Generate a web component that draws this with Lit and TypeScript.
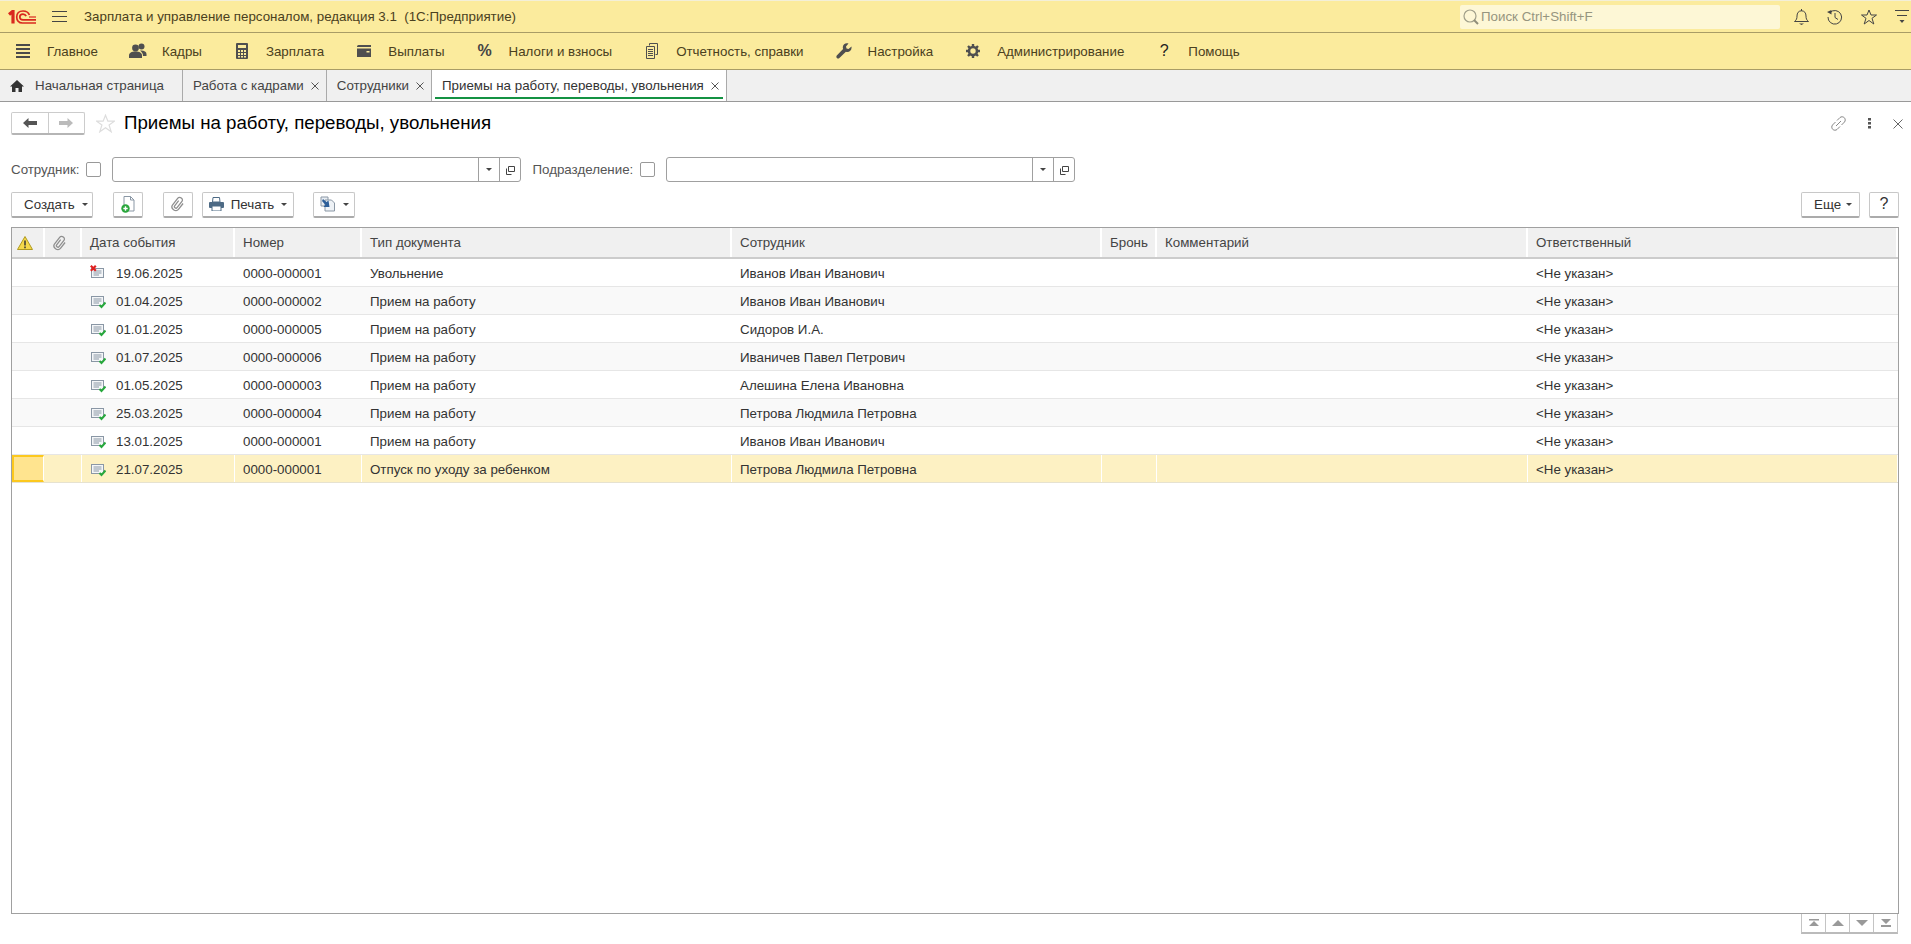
import { html, svg, LitElement, css } from 'lit';
import { customElement } from 'lit/decorators.js';

const icon = (w: number, h: number, body: unknown) =>
  html`<svg class="ic" width=${w} height=${h} viewBox="0 0 ${w} ${h}">${body}</svg>`;

const logo = icon(28, 14, svg`
  <g fill="none" stroke="#d9281e">
    <path d="M1 4.500 L5 1.200 V13.500" stroke-width="3.200"/>
    <path d="M28 13 H14.500 C10.500 13 8.700 10 8.700 7 C8.700 3.600 11 1 15 1 C18.400 1 20.500 2.600 21.400 5" stroke-width="1.700"/>
    <path d="M28 9.800 H15 C13 9.800 11.800 8.600 11.800 7 C11.800 5.200 13.200 4.100 15 4.100 C16.600 4.100 17.600 4.800 18.200 6.200" stroke-width="1.700"/>
    <path d="M28 7 H21" stroke-width="1.200"/>
  </g>`);

const burger = icon(15, 12, svg`<path d="M0 .5H15M0 5.500H15M0 10.500H15" stroke="#444" stroke-width="1"/>`);
const lines = icon(14, 14, svg`<path d="M0 1H14M0 5H14M0 9H14M0 13H14" stroke="#4a4a4a" stroke-width="2"/>`);
const people = icon(18, 16, svg`<g fill="#4f4f4f">
  <circle cx="6.500" cy="5" r="3.400"/><path d="M0 15v-2.500C0 10 2.500 8.500 6.500 8.500S13 10 13 12.500V15z"/>
  <circle cx="12.500" cy="3.600" r="3"/><path d="M11 7.500c3.500-.5 6.500 1 6.500 3.500v2H14c0-2.500-1-4-3-5.500z"/></g>`);
const calc = icon(12, 16, svg`<rect width="12" height="16" rx="1" fill="#4f4f4f"/><rect x="2" y="2" width="8" height="3" fill="#fbeb9d"/>
  <g fill="#fbeb9d"><rect x="2" y="7" width="2" height="2"/><rect x="5" y="7" width="2" height="2"/><rect x="8" y="7" width="2" height="2"/>
  <rect x="2" y="10" width="2" height="2"/><rect x="5" y="10" width="2" height="2"/><rect x="8" y="10" width="2" height="2"/>
  <rect x="2" y="13" width="2" height="1.500"/><rect x="5" y="13" width="2" height="1.500"/><rect x="8" y="13" width="2" height="1.500"/></g>`);
const wallet = icon(14, 12, svg`<path d="M0 1.500Q0 0 1.500 0H14V2H0z" fill="#4f4f4f"/><path d="M0 3.500H14V12H0z" fill="#4f4f4f"/><rect x="9.500" y="6" width="3" height="1.500" fill="#fbeb9d"/>`);
const reports = icon(12, 16, svg`<g fill="none" stroke="#4f4f4f"><path d="M3.500 2.500V.5H11.500V11.500H9.500"/><path d="M.5 3.500H8.500V15.500H.5z"/><path d="M2 6.500H7M2 8.500H7M2 10.500H7M2 12.500H7"/></g>`);
const wrench = icon(16, 16, svg`<path d="M15.500 3.500 12.500 6 10.500 5.500 10 3.500 12.500 .6C10 -.4 7 1 6.800 4c0 .7.1 1.300.3 1.900L.8 12.500C.2 13.200.2 14.300.9 15c.7.7 1.800.7 2.500 0l6.500-6.300c3 1 6.200-1.200 5.600-5.200z" fill="#4f4f4f"/>`);
const gear = icon(16, 16, svg`<g stroke="#4f4f4f" fill="none"><circle cx="8" cy="8" r="4" stroke-width="2.600"/>
  <path d="M8 1V3.500M8 12.500V15M1 8H3.500M12.500 8H15M3 3 4.800 4.800M11.200 11.200 13 13M13 3 11.200 4.800M4.800 11.200 3 13" stroke-width="2.400"/></g>`);
const home = icon(14, 12, svg`<path d="M7 0 14 6.500H12V12H8.500V8H5.500V12H2V6.500H0z" fill="#333"/>`);
const close = icon(8, 8, svg`<path d="M.5.5 7.500 7.500M7.500.5.5 7.500" stroke="#555" stroke-width="1"/>`);
const search = icon(16, 16, svg`<circle cx="7" cy="7" r="6" fill="none" stroke="#a09f8a" stroke-width="1.200"/><path d="M11 11 15 15" stroke="#8f8e7a" stroke-width="2"/>`);
const bell = icon(15, 16, svg`<g fill="none" stroke="#444"><path d="M.5 12.500H14.500C12.500 11 12 9.500 12 7 12 4 10.500 1.800 7.500 1.800S3 4 3 7C3 9.500 2.500 11 .5 12.500z"/><path d="M7.500 0V2"/></g><path d="M5 14.500H10L7.500 16z" fill="#444"/>`);
const history = icon(16, 16, svg`<g fill="none" stroke="#444"><path d="M3 3.500A6.800 6.800 0 1 1 1 8"/><path d="M8 4V8.500L11 10.500"/></g><path d="M0 3 4.500 1V5.500z" fill="#444"/>`);
const star = (c: string, w = 16, h = 16) => html`<svg class="ic" width=${w} height=${h} viewBox="0 0 16 16"><path d="M8 1 10 6H15.500L11 9.300 12.800 15 8 11.500 3.200 15 5 9.300 .5 6H6z" fill="none" stroke=${c}/></svg>`;
const menuRight = icon(14, 14, svg`<path d="M0 .5H14M2 5.500H12" stroke="#444"/><path d="M4.500 10H9.500L7 13z" fill="#444"/>`);
const link = icon(15, 15, svg`<g fill="none" stroke="#888"><path d="M6 4.500 9 1.500C10.200.5 12 .5 13.300 1.700 14.500 3 14.500 4.800 13.500 6L10.500 9"/><path d="M9 10.500 6 13.500C4.800 14.500 3 14.500 1.700 13.300 .5 12 .5 10.200 1.500 9L4.500 6"/><path d="M5 10 10 5"/></g>`);
const dots = icon(3, 11, svg`<g fill="#555"><rect width="3" height="2.500"/><rect y="4" width="3" height="2.500"/><rect y="8" width="3" height="2.500"/></g>`);
const closeBig = icon(10, 10, svg`<path d="M.5.5 9.500 9.500M9.500.5.5 9.500" stroke="#666"/>`);
const back = icon(14, 10, svg`<path d="M0 5 5.500 0V3H14V7H5.500V10z" fill="#555"/>`);
const forward = icon(14, 10, svg`<path d="M14 5 8.500 0V3H0V7H8.500V10z" fill="#bbb"/>`);
const caret = icon(6, 3, svg`<path d="M0 0H6L3 3z" fill="#444"/>`);
const pick = icon(9, 10, svg`<g fill="none" stroke="#444"><path d="M2.500 1.500H8.500V6.500H2.500z"/><path d="M.5 3.500V9.500H5.500"/></g>`);
const clip = html`<svg class="ic" width="16" height="16" viewBox="0 0 16 16"><path transform="rotate(38 8 8)" d="M6.500 5V11.500C6.500 13.300 9.500 13.300 9.500 11.500V3.500C9.500 .5 4.300 .5 4.300 3.500V12C4.300 16.300 11.700 16.300 11.700 12V4.500" fill="none" stroke="#8f8f8f" stroke-width="1.300"/></svg>`;
const addDoc = icon(14, 17, svg`<path d="M3 .5H9.500L13 4V15H3z" fill="#fff" stroke="#8a97a5"/><path d="M9.500 .5V4H13" fill="none" stroke="#8a97a5"/><circle cx="4.500" cy="12.500" r="4.200" fill="#2aa63c"/><path d="M2.300 12.500H6.700M4.500 10.300V14.700" stroke="#fff" stroke-width="1.400"/>`);
const printer = icon(15, 14, svg`<path d="M4 .5H10.500L11 5H3.500z" fill="#fff" stroke="#4d6a85"/><rect y="5" width="15" height="6" rx="1" fill="#4d6a85"/><rect x="3" y="9" width="9" height="5" fill="#fff" stroke="#4d6a85"/>`);
const loadDoc = icon(16, 16, svg`<path d="M1 1H8V10H1z" fill="#e8edf2" stroke="#8a97a5"/><path d="M5 4H11.500L14.500 7V15H5z" fill="#eef2f6" stroke="#8a97a5"/><path d="M3 3 6.500 6 8.500 4.500 9.500 11 3.500 11 5.300 8.800 2 5z" fill="#2d5f99"/>`);
const warn = icon(16, 14, svg`<path d="M8 .5 15.500 13.500H.5z" fill="#f4d84a" stroke="#b09a20"/><path d="M8 4.500V9.500M8 10.500V12.300" stroke="#333" stroke-width="1.500"/>`);
const docBody = svg`<rect x="1.500" y="3.500" width="12" height="9" fill="#f4f6f8" stroke="#8a97a5"/><path d="M3.500 6H11.500M3.500 8H11.500M3.500 10H9" stroke="#8a97a5"/>`;
const posted = icon(16, 16, svg`${docBody}<path d="M9.500 12 11.500 14 15.500 9.500" fill="none" stroke="#27a83c" stroke-width="2"/>`);
const removed = icon(16, 16, svg`${docBody}<path d="M.8 .8 5.800 5.800M5.800 .8 .8 5.800" stroke="#e02020" stroke-width="2.200"/>`);
const tri = (d: string) => icon(14, 8, svg`<path d=${d} fill="#999"/>`);

const menu = [
  { icon: lines, text: 'Главное' },
  { icon: people, text: 'Кадры' },
  { icon: calc, text: 'Зарплата' },
  { icon: wallet, text: 'Выплаты' },
  { icon: html`<span class="glyph bold">%</span>`, text: 'Налоги и взносы' },
  { icon: reports, text: 'Отчетность, справки' },
  { icon: wrench, text: 'Настройка' },
  { icon: gear, text: 'Администрирование' },
  { icon: html`<span class="glyph">?</span>`, text: 'Помощь' },
];

const columns = ['Дата события', 'Номер', 'Тип документа', 'Сотрудник', 'Бронь', 'Комментарий', 'Ответственный'];

const rows = [
  ['19.06.2025', '0000-000001', 'Увольнение', 'Иванов Иван Иванович'],
  ['01.04.2025', '0000-000002', 'Прием на работу', 'Иванов Иван Иванович'],
  ['01.01.2025', '0000-000005', 'Прием на работу', 'Сидоров И.А.'],
  ['01.07.2025', '0000-000006', 'Прием на работу', 'Иваничев Павел Петрович'],
  ['01.05.2025', '0000-000003', 'Прием на работу', 'Алешина Елена Ивановна'],
  ['25.03.2025', '0000-000004', 'Прием на работу', 'Петрова Людмила Петровна'],
  ['13.01.2025', '0000-000001', 'Прием на работу', 'Иванов Иван Иванович'],
  ['21.07.2025', '0000-000001', 'Отпуск по уходу за ребенком', 'Петрова Людмила Петровна'],
];

@customElement('app-root')
export class AppRoot extends LitElement {
  static styles = css`
    :host {
      display: flex;
      flex-direction: column;
      height: 100vh;
      font-family: "Liberation Sans", Arial, sans-serif;
      font-size: 13.33px;
      color: #333;
      background: #fff;
      overflow: hidden;
    }
    .ic { display: block; flex: none; }

    .titlebar {
      display: flex;
      align-items: center;
      height: 31px;
      flex: none;
      background: #fbeb9d;
      border-top: 1px solid #f3efd8;
      border-bottom: 1px solid #a89c66;
      padding-left: 8px;
      color: #4a4020;
    }
    .burger { margin-left: 16px; }
    .app-name { margin-left: 17px; white-space: pre; }
    .search {
      margin-left: auto;
      width: 320px;
      height: 24px;
      box-sizing: border-box;
      display: flex;
      align-items: center;
      gap: 2px;
      padding-left: 3px;
      background: #fdf7d6;
      border-radius: 2px;
      color: #96957f;
    }
    .top-icons {
      display: flex;
      align-items: center;
      gap: 18px;
      margin-left: 14px;
      margin-right: 2px;
    }

    .menubar {
      display: flex;
      align-items: center;
      flex: none;
      gap: 32px;
      height: 36px;
      padding-left: 15px;
      background: #fbeb9d;
      border-bottom: 1px solid #a89c66;
      color: #4a4020;
    }
    .menu-item { display: flex; align-items: center; gap: 16px; }
    .menu-icon { width: 16px; display: flex; justify-content: center; }
    .glyph { font-size: 16px; color: #222; }
    .glyph.bold { font-weight: bold; color: #444; }

    .tabs {
      display: flex;
      flex: none;
      height: 31px;
      background: #f0f0f0;
      border-bottom: 1px solid #999;
      color: #444;
    }
    .tab {
      display: flex;
      align-items: center;
      gap: 7px;
      padding: 0 7px 0 10px;
      border-right: 1px solid #aaa;
      position: relative;
    }
    .tab.home { padding: 0 18px 0 10px; gap: 11px; }
    .tab.active { background: #fff; color: #333; }
    .tab.active::after {
      content: "";
      position: absolute;
      left: 3px;
      right: 3px;
      bottom: 2px;
      height: 2px;
      background: #149243;
    }

    .page {
      flex: 1;
      min-height: 0;
      display: flex;
      flex-direction: column;
      padding: 10px 12px 10px 11px;
    }
    .head { display: flex; align-items: center; height: 23px; flex: none; }
    .nav {
      display: flex;
      height: 23px;
      width: 74px;
      box-sizing: border-box;
      border: 1px solid #ccc;
      border-bottom: 2px solid #b5b5b5;
      border-radius: 2px;
    }
    .nav div { flex: 1; display: flex; align-items: center; justify-content: center; }
    .nav div:first-child { border-right: 1px solid #ccc; }
    .fav { margin-left: 11px; }
    h1 { margin: 0 0 2px 9px; font-size: 18.7px; font-weight: normal; color: #000; }
    .head-actions { margin-left: auto; margin-right: -4px; display: flex; align-items: center; gap: 22px; }

    .filters { display: flex; align-items: center; height: 25px; margin-top: 22px; flex: none; color: #555; }
    .check {
      width: 15px;
      height: 15px;
      box-sizing: border-box;
      border: 1px solid #999;
      border-radius: 2px;
      margin-left: 7px;
    }
    .field {
      display: flex;
      height: 25px;
      box-sizing: border-box;
      width: 409px;
      margin-left: 11px;
      border: 1px solid #a0a0a0;
      border-radius: 3px;
    }
    .field .grow { flex: 1; }
    .field .cell {
      display: flex;
      align-items: center;
      justify-content: center;
      box-sizing: border-box;
      width: 21px;
      border-left: 1px solid #a0a0a0;
    }
    .sub-label { margin-left: 11px; }

    .toolbar { display: flex; align-items: center; margin-top: 9px; height: 27px; flex: none; }
    .btn {
      display: flex;
      align-items: center;
      justify-content: center;
      gap: 7px;
      height: 26px;
      box-sizing: border-box;
      background: #fff;
      border: 1px solid #c8c8c8;
      border-bottom: 2px solid #ababab;
      border-radius: 2px;
      color: #333;
    }
    .btn.create { width: 82px; justify-content: flex-start; padding-left: 12px; }
    .btn.square { width: 30px; margin-left: 20px; }
    .btn.print { width: 92px; margin-left: 9px; }
    .btn.load { width: 42px; margin-left: 19px; }
    .btn.more { width: 59px; margin-left: auto; justify-content: flex-start; padding-left: 12px; gap: 5px; }
    .btn.help { width: 30px; margin-left: 9px; font-size: 16px; }

    .table {
      flex: 1;
      min-height: 0;
      margin-top: 9px;
      border: 1px solid #a0a0a0;
    }
    .row {
      display: grid;
      grid-template-columns: 33px 37px 153px 127px 370px 370px 55px 371px 370px;
      height: 28px;
      box-sizing: border-box;
      border-bottom: 1px solid #e6e6e6;
    }
    .row.header {
      height: 31px;
      background: #f0f0f0;
      border-bottom: 2px solid #ccc;
    }
    .row.even { background: #f9f9f9; }
    .row.current { background: #fdf1c3; border-bottom-color: #e6e2d0; }
    .cell-box {
      display: flex;
      align-items: center;
      gap: 10px;
      padding: 1px 0 0 8px;
      white-space: nowrap;
      overflow: hidden;
    }
    .row.current .cell-box { border-right: 1px solid #fff; }
    .row.header .cell-box { border-right: 2px solid #fff; color: #444; padding-top: 0; }
    .row.header .cell-box.mark { padding-left: 5px; }
    .row.header .cell-box.attach { padding-left: 7px; }
    .row .active-cell {
      background: #ffe48f;
      border: 2px solid #fcc81e;
      margin-right: 1px;
    }

    .pager { display: flex; justify-content: flex-end; flex: none; height: 20px; }
    .pager-group {
      display: flex;
      width: 97px;
      box-sizing: border-box;
      border: 1px solid #c4c4c4;
      border-top: none;
      border-bottom: 2px solid #bbb;
      margin-right: 1px;
    }
    .pager-group div {
      flex: 1;
      display: flex;
      align-items: center;
      justify-content: center;
      border-right: 1px solid #c4c4c4;
    }
    .pager-group div:last-child { border-right: none; }
  `;

  renderRow(r: string[], i: number) {
    const current = i === rows.length - 1;
    const cls = `row ${current ? 'current' : i % 2 ? 'even' : ''}`;
    return html`<div class=${cls}>
      <div class="cell-box ${current ? 'active-cell' : ''}"></div>
      <div class="cell-box"></div>
      <div class="cell-box">${i === 0 ? removed : posted}<span>${r[0]}</span></div>
      <div class="cell-box">${r[1]}</div>
      <div class="cell-box">${r[2]}</div>
      <div class="cell-box">${r[3]}</div>
      <div class="cell-box"></div>
      <div class="cell-box"></div>
      <div class="cell-box">&lt;Не указан&gt;</div>
    </div>`;
  }

  render() {
    return html`
      <div class="titlebar">
        ${logo}
        <div class="burger">${burger}</div>
        <div class="app-name">Зарплата и управление персоналом, редакция 3.1  (1С:Предприятие)</div>
        <div class="search">${search}<span>Поиск Ctrl+Shift+F</span></div>
        <div class="top-icons">${bell}${history}${star('#444')}${menuRight}</div>
      </div>
      <div class="menubar">
        ${menu.map((m) => html`<div class="menu-item"><div class="menu-icon">${m.icon}</div><span>${m.text}</span></div>`)}
      </div>
      <div class="tabs">
        <div class="tab home">${home}<span>Начальная страница</span></div>
        <div class="tab"><span>Работа с кадрами</span>${close}</div>
        <div class="tab"><span>Сотрудники</span>${close}</div>
        <div class="tab active"><span>Приемы на работу, переводы, увольнения</span>${close}</div>
      </div>
      <div class="page">
        <div class="head">
          <div class="nav"><div>${back}</div><div>${forward}</div></div>
          <div class="fav">${star('#ddd', 19, 19)}</div>
          <h1>Приемы на работу, переводы, увольнения</h1>
          <div class="head-actions">${link}${dots}${closeBig}</div>
        </div>
        <div class="filters">
          <span>Сотрудник:</span>
          <div class="check"></div>
          <div class="field"><div class="grow"></div><div class="cell">${caret}</div><div class="cell">${pick}</div></div>
          <span class="sub-label">Подразделение:</span>
          <div class="check"></div>
          <div class="field"><div class="grow"></div><div class="cell">${caret}</div><div class="cell">${pick}</div></div>
        </div>
        <div class="toolbar">
          <div class="btn create"><span>Создать</span>${caret}</div>
          <div class="btn square">${addDoc}</div>
          <div class="btn square">${clip}</div>
          <div class="btn print">${printer}<span>Печать</span>${caret}</div>
          <div class="btn load">${loadDoc}${caret}</div>
          <div class="btn more"><span>Еще</span>${caret}</div>
          <div class="btn help">?</div>
        </div>
        <div class="table">
          <div class="row header">
            <div class="cell-box mark">${warn}</div>
            <div class="cell-box attach">${clip}</div>
            ${columns.map((c) => html`<div class="cell-box">${c}</div>`)}
          </div>
          ${rows.map((r, i) => this.renderRow(r, i))}
        </div>
        <div class="pager">
          <div class="pager-group">
            <div>${tri('M2 0H12V1.500H2zM7 2 12 7H2z')}</div>
            <div>${tri('M7 1 13 7H1z')}</div>
            <div>${tri('M1 1H13L7 7z')}</div>
            <div>${tri('M2 0H12L7 5zM2 6H12V8H2z')}</div>
          </div>
        </div>
      </div>
    `;
  }
}

declare global {
  interface HTMLElementTagNameMap {
    'app-root': AppRoot;
  }
}
